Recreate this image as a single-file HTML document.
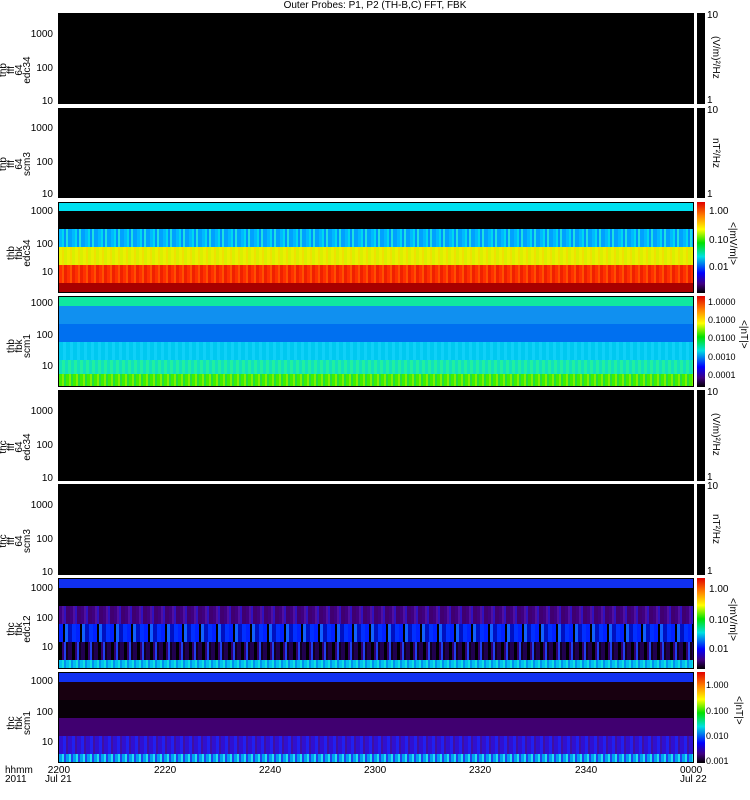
<!DOCTYPE html>
<html><head><style>
body{margin:0;width:750px;height:800px;background:#fff;position:relative;overflow:hidden;font-family:"Liberation Sans",sans-serif;font-size:10px;color:#000}
.p{position:absolute;left:58px;width:636px;background:#000;box-sizing:border-box}
.b{position:absolute;left:0;right:0}
.cb{position:absolute;left:697px;width:8px;background:#000}
.t{position:absolute;font-size:10px;line-height:10px}
.yl{position:absolute;text-align:right;width:50px;left:3px;font-size:10px;line-height:10px}
.rl{position:absolute;transform:rotate(-90deg);transform-origin:center;white-space:nowrap;font-size:10px;line-height:8px;text-align:center}
.ul{position:absolute;writing-mode:vertical-rl;white-space:nowrap;font-size:10px;left:710px}
</style></head><body>
<div class="t" style="left:0;width:750px;text-align:center;top:1px">Outer Probes: P1, P2 (TH-B,C) FFT, FBK</div>

<!-- panel 1 -->
<div class="p" style="top:13px;height:91px"></div>
<div class="cb" style="top:13px;height:91px"></div>
<div class="yl" style="top:30px">1000</div><div class="yl" style="top:64px">100</div><div class="yl" style="top:97px">10</div>
<div class="rl" style="left:-4px;top:54px;width:40px">thb<br>fff<br>64<br>edc34</div>
<div class="t" style="left:707px;top:11px">10</div><div class="t" style="left:707px;top:96px">1</div>
<div class="ul" style="top:36px">(V/m)²/Hz</div>

<!-- panel 2 -->
<div class="p" style="top:108px;height:90px"></div>
<div class="cb" style="top:108px;height:90px"></div>
<div class="yl" style="top:124px">1000</div><div class="yl" style="top:158px">100</div><div class="yl" style="top:190px">10</div>
<div class="rl" style="left:-4px;top:148px;width:40px">thb<br>fff<br>64<br>scm3</div>
<div class="t" style="left:707px;top:106px">10</div><div class="t" style="left:707px;top:190px">1</div>
<div class="ul" style="top:138px">nT²/Hz</div>

<!-- panel 3 -->
<div class="p" style="top:202px;height:91px;border:1px solid #000">
<div class="b" style="top:0;height:8px;background:#00e0f0"></div>
<div class="b" style="top:26px;height:18px;background:repeating-linear-gradient(90deg,#00b8ff 0 3px,#00d8f0 3px 5px,#0090ff 5px 7px,#20e0e0 7px 9px,#00a0ff 9px 13px)"></div>
<div class="b" style="top:44px;height:18px;background:repeating-linear-gradient(90deg,#e8f000 0 3px,#f0e000 3px 5px,#d8f000 5px 8px)"></div>
<div class="b" style="top:62px;height:18px;background:repeating-linear-gradient(90deg,#ff3000 0 3px,#ff5000 3px 5px,#f02000 5px 8px)"></div>
<div class="b" style="top:80px;height:9px;background:#a80000"></div>
</div>
<div class="cb" style="top:202px;height:91px;background:linear-gradient(#e00000,#ff8000 15%,#ffff00 30%,#00e000 45%,#00e0e0 60%,#0000ff 78%,#400080 90%,#000)"></div>
<div class="yl" style="top:207px">1000</div><div class="yl" style="top:240px">100</div><div class="yl" style="top:268px">10</div>
<div class="rl" style="left:0px;top:241px;width:40px">thb<br>fbk<br>edc34</div>
<div class="t" style="left:709px;top:207px">1.00</div><div class="t" style="left:709px;top:236px">0.10</div><div class="t" style="left:709px;top:263px">0.01</div>
<div class="ul" style="left:727px;top:222px">&lt;|mV/m|&gt;</div>

<!-- panel 4 -->
<div class="p" style="top:296px;height:91px;border:1px solid #000">
<div class="b" style="top:0;height:9px;background:#10e8a0"></div>
<div class="b" style="top:9px;height:18px;background:#1090f0"></div>
<div class="b" style="top:27px;height:18px;background:#0070f0"></div>
<div class="b" style="top:45px;height:18px;background:repeating-linear-gradient(90deg,#00c8f0 0 4px,#10d0f8 4px 7px)"></div>
<div class="b" style="top:63px;height:14px;background:repeating-linear-gradient(90deg,#10e0c0 0 3px,#20f0a0 3px 6px)"></div>
<div class="b" style="top:77px;height:12px;background:repeating-linear-gradient(90deg,#40f000 0 3px,#80f000 3px 5px,#20e040 5px 7px)"></div>
</div>
<div class="cb" style="top:296px;height:91px;background:linear-gradient(#e00000,#ff8000 15%,#ffff00 30%,#00e000 45%,#00e0e0 60%,#0000ff 78%,#400080 90%,#000)"></div>
<div class="yl" style="top:299px">1000</div><div class="yl" style="top:331px">100</div><div class="yl" style="top:362px">10</div>
<div class="rl" style="left:0px;top:334px;width:40px">thb<br>fbk<br>scm1</div>
<div class="t" style="left:708px;top:297px;font-size:9px">1.0000</div><div class="t" style="left:708px;top:315px;font-size:9px">0.1000</div><div class="t" style="left:708px;top:333px;font-size:9px">0.0100</div><div class="t" style="left:708px;top:352px;font-size:9px">0.0010</div><div class="t" style="left:708px;top:370px;font-size:9px">0.0001</div>
<div class="ul" style="left:738px;top:320px">&lt;|nT|&gt;</div>

<!-- panel 5 -->
<div class="p" style="top:390px;height:91px"></div>
<div class="cb" style="top:390px;height:91px"></div>
<div class="yl" style="top:407px">1000</div><div class="yl" style="top:441px">100</div><div class="yl" style="top:474px">10</div>
<div class="rl" style="left:-4px;top:431px;width:40px">thc<br>fff<br>64<br>edc34</div>
<div class="t" style="left:707px;top:388px">10</div><div class="t" style="left:707px;top:473px">1</div>
<div class="ul" style="top:413px">(V/m)²/Hz</div>

<!-- panel 6 -->
<div class="p" style="top:484px;height:91px"></div>
<div class="cb" style="top:484px;height:91px"></div>
<div class="yl" style="top:501px">1000</div><div class="yl" style="top:535px">100</div><div class="yl" style="top:568px">10</div>
<div class="rl" style="left:-4px;top:525px;width:40px">thc<br>fff<br>64<br>scm3</div>
<div class="t" style="left:707px;top:482px">10</div><div class="t" style="left:707px;top:567px">1</div>
<div class="ul" style="top:514px">nT²/Hz</div>

<!-- panel 7 -->
<div class="p" style="top:578px;height:91px;border:1px solid #000">
<div class="b" style="top:0;height:9px;background:#1030f0"></div>
<div class="b" style="top:27px;height:18px;background:repeating-linear-gradient(90deg,#400080 0 3px,#5010a0 3px 5px,#3010c0 5px 7px,#400070 7px 11px)"></div>
<div class="b" style="top:45px;height:18px;background:repeating-linear-gradient(90deg,#0020ff 0 4px,#000 4px 6px,#1060ff 6px 9px,#0010c0 9px 13px,#0030ff 13px 17px)"></div>
<div class="b" style="top:63px;height:18px;background:repeating-linear-gradient(90deg,#000 0 3px,#300070 3px 5px,#2040f0 5px 7px,#100020 7px 9px,#200050 9px 13px)"></div>
<div class="b" style="top:81px;height:8px;background:repeating-linear-gradient(90deg,#00c0f0 0 3px,#10e0e0 3px 5px,#0090f0 5px 7px)"></div>
</div>
<div class="cb" style="top:578px;height:91px;background:linear-gradient(#e00000,#ff8000 15%,#ffff00 30%,#00e000 45%,#00e0e0 60%,#0000ff 78%,#400080 90%,#000)"></div>
<div class="yl" style="top:584px">1000</div><div class="yl" style="top:614px">100</div><div class="yl" style="top:643px">10</div>
<div class="rl" style="left:0px;top:617px;width:40px">thc<br>fbk<br>edc12</div>
<div class="t" style="left:709px;top:585px">1.00</div><div class="t" style="left:709px;top:616px">0.10</div><div class="t" style="left:709px;top:645px">0.01</div>
<div class="ul" style="left:727px;top:598px">&lt;|mV/m|&gt;</div>

<!-- panel 8 -->
<div class="p" style="top:672px;height:91px;border:1px solid #000">
<div class="b" style="top:0;height:9px;background:#1030f0"></div>
<div class="b" style="top:9px;height:18px;background:#180010"></div>
<div class="b" style="top:27px;height:18px;background:#080008"></div>
<div class="b" style="top:45px;height:18px;background:#400070"></div>
<div class="b" style="top:63px;height:18px;background:repeating-linear-gradient(90deg,#3010d0 0 4px,#2020f0 4px 7px,#4010a0 7px 9px)"></div>
<div class="b" style="top:81px;height:8px;background:repeating-linear-gradient(90deg,#00a0f0 0 3px,#20e0f0 3px 5px,#2040f0 5px 7px)"></div>
</div>
<div class="cb" style="top:672px;height:91px;background:linear-gradient(#e00000,#ff8000 15%,#ffff00 30%,#00e000 45%,#00e0e0 60%,#0000ff 78%,#400080 90%,#000)"></div>
<div class="yl" style="top:677px">1000</div><div class="yl" style="top:708px">100</div><div class="yl" style="top:738px">10</div>
<div class="rl" style="left:0px;top:711px;width:40px">thc<br>fbk<br>scm1</div>
<div class="t" style="left:706px;top:680px;font-size:9px">1.000</div><div class="t" style="left:706px;top:706px;font-size:9px">0.100</div><div class="t" style="left:706px;top:731px;font-size:9px">0.010</div><div class="t" style="left:706px;top:756px;font-size:9px">0.001</div>
<div class="ul" style="left:733px;top:696px">&lt;|nT|&gt;</div>

<!-- x axis -->
<div class="t" style="left:5px;top:766px;line-height:9px">hhmm<br>2011</div>
<div class="t" style="left:45px;top:766px;line-height:9px">&nbsp;2200<br>Jul 21</div>
<div class="t" style="left:154px;top:766px">2220</div>
<div class="t" style="left:259px;top:766px">2240</div>
<div class="t" style="left:364px;top:766px">2300</div>
<div class="t" style="left:469px;top:766px">2320</div>
<div class="t" style="left:575px;top:766px">2340</div>
<div class="t" style="left:680px;top:766px;line-height:9px">0000<br>Jul 22</div>
</body></html>
